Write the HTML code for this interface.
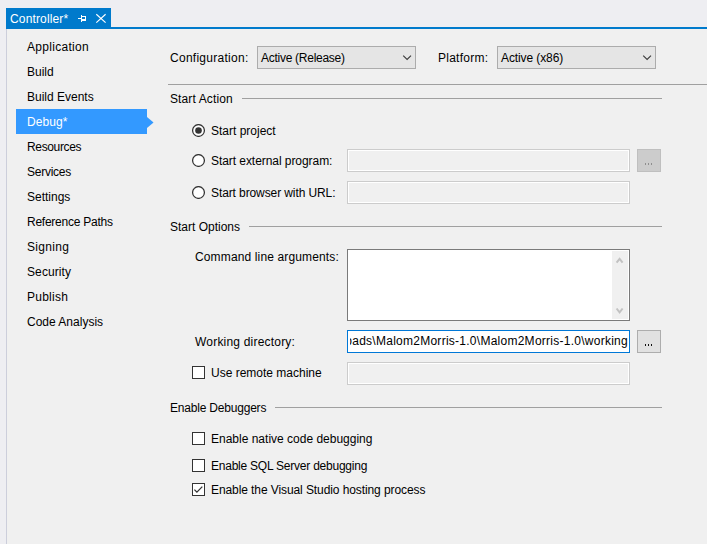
<!DOCTYPE html>
<html><head><meta charset="utf-8">
<style>
html,body{margin:0;padding:0;width:707px;height:544px;overflow:hidden;background:#EEEEF2;}
body{position:relative;font-family:"Liberation Sans",sans-serif;font-size:12px;color:#000;}
.a{position:absolute;box-sizing:border-box;}
.t{position:absolute;white-space:nowrap;line-height:14px;font-size:12px;}
.sb{color:#000;}
.hl{position:absolute;height:1px;background:#A0A0A0;}
.tbd{position:absolute;box-sizing:border-box;border:1px solid #CCCCCC;background:#F0F0F0;box-shadow:inset 0 0 0 1px #FFFFFF;}
.rad{position:absolute;width:13px;height:13px;box-sizing:border-box;border:1px solid #333;border-radius:50%;background:#fff;}
.chk{position:absolute;width:13px;height:13px;box-sizing:border-box;border:1px solid #333;background:#fff;}
</style></head>
<body>
<!-- tab -->
<div class="a" style="left:6px;top:8px;width:105px;height:21px;background:#007ACC;"></div>
<div class="a" style="left:6px;top:27px;width:701px;height:2px;background:#007ACC;"></div>
<div class="t" style="left:10px;top:12px;color:#fff;letter-spacing:0.15px;">Controller*</div>
<div class="a" style="left:78px;top:18px;width:3px;height:1px;background:#fff;"></div>
<div class="a" style="left:81px;top:15px;width:1px;height:7px;background:#fff;"></div>
<div class="a" style="left:82px;top:16px;width:4px;height:5px;border:1px solid #fff;border-left:0;border-bottom-width:2px;"></div>
<svg class="a" style="left:95px;top:13px" width="12" height="11" viewBox="0 0 12 11">
  <path d="M1.3 1.2L10.6 9.6M10.6 1.2L1.3 9.6" stroke="#fff" stroke-width="1.15" fill="none"/>
</svg>

<!-- content -->
<div class="a" style="left:6px;top:29px;width:701px;height:515px;background:#F0F0F0;border-left:1px solid #CCCEDB;"></div>

<!-- sidebar -->
<div class="a" style="left:16px;top:109px;width:131px;height:25px;background:#3399FF;"></div>
<svg class="a" style="left:147px;top:116px" width="8" height="13" viewBox="0 0 8 13">
  <path d="M0 1L6.5 6.5L0 12Z" fill="#3399FF"/>
</svg>
<div class="t sb" style="left:27px;top:40px;letter-spacing:0.3px;">Application</div>
<div class="t sb" style="left:27px;top:65px;">Build</div>
<div class="t sb" style="left:27px;top:90px;">Build Events</div>
<div class="t" style="left:27px;top:115px;color:#fff;letter-spacing:0.1px;">Debug*</div>
<div class="t sb" style="left:27px;top:140px;letter-spacing:-0.35px;">Resources</div>
<div class="t sb" style="left:27px;top:165px;letter-spacing:-0.25px;">Services</div>
<div class="t sb" style="left:27px;top:190px;">Settings</div>
<div class="t sb" style="left:27px;top:215px;letter-spacing:-0.25px;">Reference Paths</div>
<div class="t sb" style="left:27px;top:240px;letter-spacing:0.3px;">Signing</div>
<div class="t sb" style="left:27px;top:265px;letter-spacing:0.1px;">Security</div>
<div class="t sb" style="left:27px;top:290px;letter-spacing:0.25px;">Publish</div>
<div class="t sb" style="left:27px;top:315px;">Code Analysis</div>

<!-- config row -->
<div class="t" style="left:170px;top:51px;letter-spacing:0.27px;">Configuration:</div>
<div class="a" style="left:257px;top:46px;width:159px;height:23px;background:#E5E5E5;border:1px solid #ACACAC;"></div>
<div class="t" style="left:261px;top:51px;letter-spacing:-0.27px;">Active (Release)</div>
<svg class="a" style="left:402px;top:54px" width="11" height="8" viewBox="0 0 11 8">
  <path d="M1.2 1.6L5.1 5.5L9 1.6" stroke="#3C3C3C" stroke-width="1.15" fill="none"/>
</svg>
<div class="t" style="left:438px;top:51px;letter-spacing:0.25px;">Platform:</div>
<div class="a" style="left:497px;top:46px;width:159px;height:23px;background:#E5E5E5;border:1px solid #ACACAC;"></div>
<div class="t" style="left:501px;top:51px;letter-spacing:-0.1px;">Active (x86)</div>
<svg class="a" style="left:642px;top:54px" width="11" height="8" viewBox="0 0 11 8">
  <path d="M1.2 1.6L5.1 5.5L9 1.6" stroke="#3C3C3C" stroke-width="1.15" fill="none"/>
</svg>
<div class="hl" style="left:168px;top:84px;width:539px;"></div>

<!-- Start Action -->
<div class="t" style="left:170px;top:92px;letter-spacing:0.12px;">Start Action</div>
<div class="hl" style="left:242px;top:98px;width:420px;"></div>

<svg class="a" style="left:192px;top:124px" width="13" height="13" viewBox="0 0 13 13"><circle cx="6.5" cy="6.5" r="5.9" fill="#fff" stroke="#333" stroke-width="1.25"/></svg>
<svg class="a" style="left:192px;top:124px" width="13" height="13" viewBox="0 0 13 13"><circle cx="6.5" cy="6.5" r="3.3" fill="#333"/></svg>
<div class="t" style="left:211px;top:124px;">Start project</div>

<svg class="a" style="left:192px;top:154px" width="13" height="13" viewBox="0 0 13 13"><circle cx="6.5" cy="6.5" r="5.9" fill="#fff" stroke="#333" stroke-width="1.25"/></svg>
<div class="t" style="left:211px;top:154px;letter-spacing:-0.06px;">Start external program:</div>
<div class="tbd" style="left:347px;top:149px;width:283px;height:23px;"></div>
<div class="a" style="left:637px;top:149px;width:24px;height:23px;background:#CCCCCC;border:1px solid #BFBFBF;"></div>
<div class="a" style="left:645px;top:163px;width:1px;height:2px;background:#8E8E8E;box-shadow:3px 0 #8E8E8E,6px 0 #8E8E8E;"></div>

<svg class="a" style="left:192px;top:186px" width="13" height="13" viewBox="0 0 13 13"><circle cx="6.5" cy="6.5" r="5.9" fill="#fff" stroke="#333" stroke-width="1.25"/></svg>
<div class="t" style="left:211px;top:186px;letter-spacing:-0.1px;">Start browser with URL:</div>
<div class="tbd" style="left:347px;top:181px;width:283px;height:23px;"></div>

<!-- Start Options -->
<div class="t" style="left:170px;top:220px;">Start Options</div>
<div class="hl" style="left:249px;top:226px;width:413px;"></div>

<div class="t" style="left:195px;top:250px;letter-spacing:0.14px;">Command line arguments:</div>
<div class="a" style="left:347px;top:249px;width:283px;height:72px;background:#fff;border:1px solid #7A7A7A;"></div>
<div class="a" style="left:612px;top:251px;width:16px;height:68px;background:#F0F0F0;"></div>
<svg class="a" style="left:614px;top:255px" width="12" height="10" viewBox="0 0 12 10">
  <path d="M2.6 7.7L5.6 3.9L8.6 7.7" stroke="#C2C2C2" stroke-width="2" fill="none"/>
</svg>
<svg class="a" style="left:614px;top:306px" width="12" height="10" viewBox="0 0 12 10">
  <path d="M2.6 2.5L5.6 6.3L8.6 2.5" stroke="#C2C2C2" stroke-width="2" fill="none"/>
</svg>

<div class="t" style="left:195px;top:335px;letter-spacing:0.2px;">Working directory:</div>
<div class="a" style="left:347px;top:330px;width:283px;height:23px;background:#fff;border:1px solid #0078D7;overflow:hidden;">
  <div class="a" style="left:2px;right:1px;top:0;bottom:0;overflow:hidden;"><div class="t" style="right:0px;top:3px;letter-spacing:0.26px;">Downloads\Malom2Morris-1.0\Malom2Morris-1.0\working</div></div>
</div>
<div class="a" style="left:637px;top:330px;width:24px;height:23px;background:#E1E1E1;border:1px solid #ADADAD;"></div>
<div class="a" style="left:645px;top:344px;width:1px;height:2px;background:#111;box-shadow:3px 0 #111,6px 0 #111;"></div>

<div class="chk" style="left:192px;top:366px;"></div>
<div class="t" style="left:211px;top:366px;">Use remote machine</div>
<div class="tbd" style="left:347px;top:362px;width:283px;height:23px;"></div>

<!-- Enable Debuggers -->
<div class="t" style="left:170px;top:401px;letter-spacing:-0.2px;">Enable Debuggers</div>
<div class="hl" style="left:275px;top:407px;width:387px;"></div>

<div class="chk" style="left:192px;top:432px;"></div>
<div class="t" style="left:211px;top:432px;">Enable native code debugging</div>
<div class="chk" style="left:192px;top:459px;"></div>
<div class="t" style="left:211px;top:459px;letter-spacing:-0.23px;">Enable SQL Server debugging</div>
<div class="chk" style="left:192px;top:483px;"></div>
<svg class="a" style="left:192px;top:483px" width="13" height="13" viewBox="0 0 13 13">
  <path d="M2.4 6.6L4.9 9.1L10.3 3.6" stroke="#333" stroke-width="1.3" fill="none"/>
</svg>
<div class="t" style="left:211px;top:483px;letter-spacing:-0.09px;">Enable the Visual Studio hosting process</div>
</body></html>
